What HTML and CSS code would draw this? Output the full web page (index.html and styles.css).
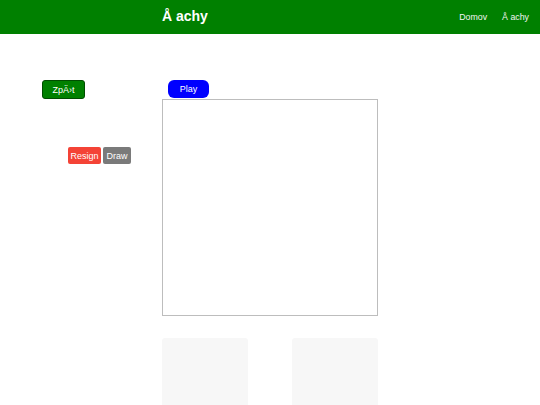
FILE: index.html
```html
<!DOCTYPE html>
<html>
<head>
<meta charset="utf-8">
<link rel="stylesheet" href="styles.css">
</head>
<body>
<header class="topbar">
  <div class="brand">Å achy</div>
  <nav class="nav">
    <a class="nav-link">Domov</a>
    <a class="nav-link">Å achy</a>
  </nav>
</header>
<main class="main">
  <aside class="side">
    <button class="btn btn-back">ZpÄ›t</button>
    <div class="side-actions">
      <button class="btn btn-resign">Resign</button>
      <button class="btn btn-draw">Draw</button>
    </div>
  </aside>
  <section class="center">
    <button class="btn btn-play">Play</button>
    <div class="board"></div>
    <div class="cards">
      <div class="card"></div>
      <div class="card"></div>
    </div>
  </section>
</main>
</body>
</html>
```
FILE: styles.css
```css
html, body {
  margin: 0;
  padding: 0;
  background: #fff;
  font-family: "Liberation Sans", Arial, sans-serif;
  overflow: hidden;
}
.topbar {
  height: 34px;
  background: #008000;
  display: flex;
  align-items: center;
  justify-content: space-between;
  padding: 0 11px 0 162px;
}
.brand {
  color: #fff;
  font-weight: bold;
  font-size: 14px;
  margin-top: -2px;
}
.nav {
  display: flex;
  gap: 15px;
}
.nav-link {
  color: #f4f4f4;
  font-size: 8.8px;
}
.main {
  display: flex;
  padding-left: 42px;
  padding-top: 46px;
  gap: 32px;
}
.side {
  width: 88px;
  display: flex;
  flex-direction: column;
}
.btn {
  font-family: "Liberation Sans", Arial, sans-serif;
  font-size: 9px;
  color: #fff;
  border: none;
  padding: 0;
  height: 17px;
  cursor: pointer;
}
.btn-back {
  width: 43px;
  height: 19px;
  background: #008000;
  border: 1px solid #004d00;
  border-radius: 3px;
}
.side-actions {
  display: flex;
  justify-content: flex-end;
  gap: 2px;
  margin-top: 48px;
  margin-right: -1px;
}
.btn-resign {
  width: 33px;
  background: #f44336;
  border-radius: 2px;
}
.btn-draw {
  width: 28px;
  background: #7a7a7a;
  border-radius: 2px;
}
.center {
  width: 216px;
  display: flex;
  flex-direction: column;
}
.btn-play {
  align-self: flex-start;
  margin-left: 6px;
  width: 41px;
  height: 18px;
  background: #0000ff;
  border-radius: 6px;
}
.board {
  margin-top: 1px;
  height: 215px;
  border: 1px solid #bdbdbd;
}
.cards {
  margin-top: 22px;
  display: flex;
  justify-content: space-between;
}
.card {
  width: 86px;
  height: 80px;
  background: #f7f7f7;
  border-radius: 3px;
}
```
